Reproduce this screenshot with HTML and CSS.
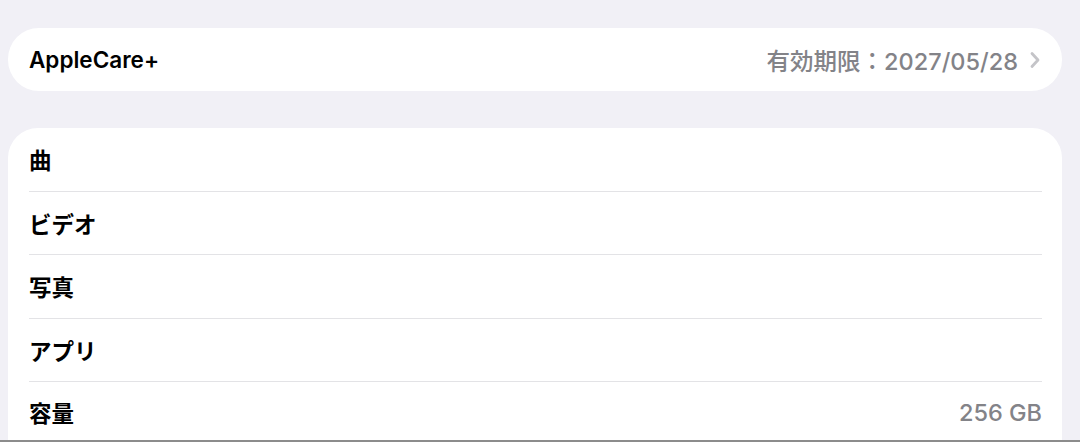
FILE: index.html
```html
<!DOCTYPE html>
<html lang="ja">
<head>
  <meta charset="UTF-8">
  <title>情報</title>
  <link rel="stylesheet" href="styles.css">
</head>
<body>
  <div class="page">
    <!-- AppleCare -->
    <div class="card single">
      <div class="row">
        <span class="label">AppleCare+</span>
        <span class="value">有効期限：2027/05/28</span>
        <svg class="chevron" width="12" height="18" viewBox="0 0 12 18">
          <path d="M3 2.5 L9 9 L3 15.5" fill="none" stroke="#c4c4c8" stroke-width="2.8" stroke-linecap="round" stroke-linejoin="round"/>
        </svg>
      </div>
    </div>

    <!-- 内訳 -->
    <div class="card list">
      <div class="row"><span class="label">曲</span></div>
      <div class="row"><span class="label">ビデオ</span></div>
      <div class="row"><span class="label">写真</span></div>
      <div class="row"><span class="label">アプリ</span></div>
      <div class="row"><span class="label">容量</span><span class="value">256 GB</span></div>
    </div>
  </div>
  <div class="bottom-line"></div>
</body>
</html>
```

FILE: styles.css
```css
* { box-sizing: border-box; }
html, body {
  margin: 0;
  height: 100%;
  overflow: hidden;
}
body {
  background: #f1f0f6;
  font-family: Inter, "Noto Sans CJK JP", sans-serif;
  color: #000;
  position: relative;
}

.page {
  padding: 28px 18px 0 8px;
  display: flex;
  flex-direction: column;
  gap: 37px;
}

.card {
  background: #fff;
  border-radius: 31px;
}

.card.list {
  border-radius: 30px 30px 0 0;
}

.row {
  height: 63.5px;
  margin: 0 20px 0 21px;
  display: flex;
  align-items: center;
  font-size: 22.5px;
  border-bottom: 1px solid #e3e3e6;
}
.card.single .row { height: 63px; border-bottom: none; }
.card.list .row:last-child { border-bottom: none; height: 60px; }

.label {
  font-weight: 600;
  flex: 1;
}

.value {
  color: #838388;
  font-size: 23.5px;
  font-weight: 500;
}

.chevron {
  margin-left: 11px;
  margin-right: 1px;
}

.bottom-line {
  position: absolute;
  left: 0;
  right: 0;
  bottom: 0;
  height: 2px;
  background: #8c8c8c;
}
```
